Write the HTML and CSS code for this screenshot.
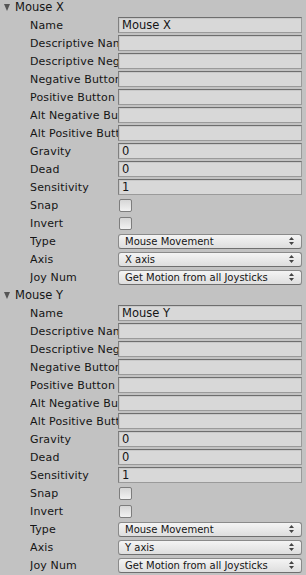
FILE: index.html
```html
<!DOCTYPE html>
<html>
<head>
<meta charset="utf-8">
<link rel="stylesheet" href="styles.css">
</head>
<body>
<div class="panel">
  <div class="section">
    <div class="header"><span class="tri"></span><span class="title">Mouse X</span></div>
    <div class="row"><span class="label">Name</span><div class="field">Mouse X</div></div>
    <div class="row"><span class="label">Descriptive Name</span><div class="field"></div></div>
    <div class="row"><span class="label">Descriptive Negative Name</span><div class="field"></div></div>
    <div class="row"><span class="label">Negative Button</span><div class="field"></div></div>
    <div class="row"><span class="label">Positive Button</span><div class="field"></div></div>
    <div class="row"><span class="label">Alt Negative Button</span><div class="field"></div></div>
    <div class="row"><span class="label">Alt Positive Button</span><div class="field"></div></div>
    <div class="row"><span class="label">Gravity</span><div class="field">0</div></div>
    <div class="row"><span class="label">Dead</span><div class="field">0</div></div>
    <div class="row"><span class="label">Sensitivity</span><div class="field">1</div></div>
    <div class="row"><span class="label">Snap</span><div class="check"></div></div>
    <div class="row"><span class="label">Invert</span><div class="check"></div></div>
    <div class="row"><span class="label">Type</span><div class="popup"><span>Mouse Movement</span><svg class="arr" width="5" height="8" viewBox="0 0 5 8"><path d="M0 3 L2.5 0 L5 3 Z M0 5 L2.5 8 L5 5 Z" fill="#444"/></svg></div></div>
    <div class="row"><span class="label">Axis</span><div class="popup"><span>X axis</span><svg class="arr" width="5" height="8" viewBox="0 0 5 8"><path d="M0 3 L2.5 0 L5 3 Z M0 5 L2.5 8 L5 5 Z" fill="#444"/></svg></div></div>
    <div class="row"><span class="label">Joy Num</span><div class="popup"><span>Get Motion from all Joysticks</span><svg class="arr" width="5" height="8" viewBox="0 0 5 8"><path d="M0 3 L2.5 0 L5 3 Z M0 5 L2.5 8 L5 5 Z" fill="#444"/></svg></div></div>
  </div>
  <div class="section">
    <div class="header"><span class="tri"></span><span class="title">Mouse Y</span></div>
    <div class="row"><span class="label">Name</span><div class="field">Mouse Y</div></div>
    <div class="row"><span class="label">Descriptive Name</span><div class="field"></div></div>
    <div class="row"><span class="label">Descriptive Negative Name</span><div class="field"></div></div>
    <div class="row"><span class="label">Negative Button</span><div class="field"></div></div>
    <div class="row"><span class="label">Positive Button</span><div class="field"></div></div>
    <div class="row"><span class="label">Alt Negative Button</span><div class="field"></div></div>
    <div class="row"><span class="label">Alt Positive Button</span><div class="field"></div></div>
    <div class="row"><span class="label">Gravity</span><div class="field">0</div></div>
    <div class="row"><span class="label">Dead</span><div class="field">0</div></div>
    <div class="row"><span class="label">Sensitivity</span><div class="field">1</div></div>
    <div class="row"><span class="label">Snap</span><div class="check"></div></div>
    <div class="row"><span class="label">Invert</span><div class="check"></div></div>
    <div class="row"><span class="label">Type</span><div class="popup"><span>Mouse Movement</span><svg class="arr" width="5" height="8" viewBox="0 0 5 8"><path d="M0 3 L2.5 0 L5 3 Z M0 5 L2.5 8 L5 5 Z" fill="#444"/></svg></div></div>
    <div class="row"><span class="label">Axis</span><div class="popup"><span>Y axis</span><svg class="arr" width="5" height="8" viewBox="0 0 5 8"><path d="M0 3 L2.5 0 L5 3 Z M0 5 L2.5 8 L5 5 Z" fill="#444"/></svg></div></div>
    <div class="row"><span class="label">Joy Num</span><div class="popup"><span>Get Motion from all Joysticks</span><svg class="arr" width="5" height="8" viewBox="0 0 5 8"><path d="M0 3 L2.5 0 L5 3 Z M0 5 L2.5 8 L5 5 Z" fill="#444"/></svg></div></div>
  </div>
</div>
</body>
</html>
```

FILE: styles.css
```css
html, body {
  margin: 0;
  padding: 0;
  background: #c2c2c2;
  overflow: hidden;
}
.panel {
  margin-top: -2px;
  font-family: "DejaVu Sans", Verdana, sans-serif;
  font-size: 11px;
  color: #151515;
}
.header {
  height: 18px;
  display: flex;
  align-items: center;
  padding-left: 4px;
}
.tri {
  width: 0;
  height: 0;
  border-left: 3.5px solid transparent;
  border-right: 3.5px solid transparent;
  border-top: 7px solid #555;
  margin-right: 5px;
  margin-top: 1px;
}
.title {
  font-size: 11.5px;
}
.row {
  height: 18px;
  display: flex;
  align-items: center;
  padding-left: 30px;
  padding-right: 4px;
}
.label {
  width: 88px;
  flex: none;
  overflow: hidden;
  white-space: nowrap;
  letter-spacing: 0.15px;
}
.field {
  flex: 1;
  height: 16px;
  box-sizing: border-box;
  border: 1px solid #9a9a9a;
  border-top-color: #6e6e6e;
  border-left-color: #808080;
  background: #d8d8d8;
  box-shadow: inset 1px 1px 0 #c8c8c8;
  padding-left: 3px;
  line-height: 14px;
  font-size: 11.5px;
  white-space: nowrap;
  overflow: hidden;
}
.check {
  width: 13px;
  height: 13px;
  box-sizing: border-box;
  margin-left: 1px;
  border: 1px solid #7d7d7d;
  border-radius: 2px;
  background: linear-gradient(#d6d6d6, #f2f2f2);
}
.popup {
  flex: 1;
  height: 15px;
  box-sizing: border-box;
  border: 1px solid #8a8a8a;
  border-bottom-color: #6f6f6f;
  border-radius: 3px;
  background: linear-gradient(#f4f4f4, #dedede);
  display: flex;
  align-items: center;
  justify-content: space-between;
  padding: 0 7px 0 6px;
  font-size: 10px;
  white-space: nowrap;
}
.arr {
  flex: none;
}
```
